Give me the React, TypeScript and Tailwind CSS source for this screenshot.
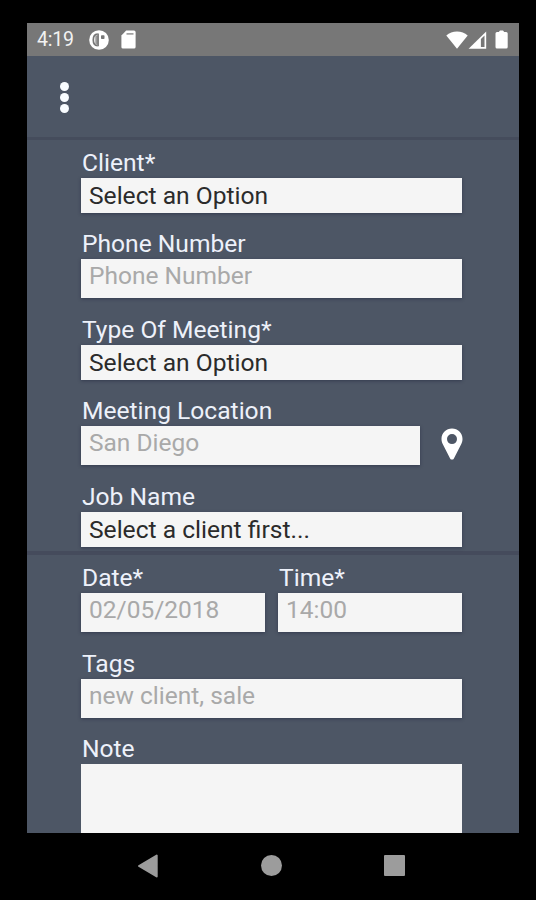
import type { ReactNode } from 'react';

function Label({ children, className = '' }: { children: ReactNode; className?: string }) {
  return (
    <div className={`h-[30px] whitespace-nowrap pl-px text-[24.6px] leading-[30px] text-[#edf1fa] ${className}`}>
      {children}
    </div>
  );
}

function Select({ value }: { value: string }) {
  return (
    <div className="h-[35px] whitespace-nowrap bg-[#f5f5f5] pl-2 pt-[3px] text-[24.6px] leading-[30px] text-[#2b2b2b] shadow-[0_1px_3px_rgba(30,34,60,0.5)]">
      {value}
    </div>
  );
}

function Input({ hint, className = '' }: { hint: string; className?: string }) {
  return (
    <div
      className={`h-[39px] whitespace-nowrap bg-[#f5f5f5] pl-2 pt-[2px] text-[24.5px] leading-[30px] text-[#a9a9a9] shadow-[0_1px_3px_rgba(30,34,60,0.5)] ${className}`}
    >
      {hint}
    </div>
  );
}

function StatusBar() {
  return (
    <div className="flex h-[33px] shrink-0 items-center bg-[#777777] pl-[10px] pr-[11px] text-white">
      <span className="w-[52px] pt-px text-[19.5px] leading-none tracking-[-0.2px] text-[#f2f2f2]">4:19</span>
      <svg width="20" height="20" viewBox="0 0 20 20">
        <circle cx="10" cy="10" r="9.8" fill="#fff" />
        <path d="M8.600 4.200C5.600 4.400 4.300 6.800 4.300 10s1.500 5.400 4.300 5.700" fill="none" stroke="#777" strokeWidth="1.700" />
        <path d="M6.300 5.600h2.600v9H6.300z" fill="#999" />
        <path d="M8.300 3.400h1.600v12.900H8.300z" fill="#777" />
        <rect x="12" y="5.300" width="3.500" height="3.700" rx=".8" fill="#777" />
      </svg>
      <svg width="15" height="19" viewBox="0 0 15 19" className="ml-[12px]">
        <path d="M5.200.5h7.800a1.600 1.600 0 0 1 1.600 1.600v14.800a1.600 1.600 0 0 1-1.600 1.600H2A1.600 1.600 0 0 1 .4 16.900V5.500z" fill="#fff" />
        <path d="M5.500 3.200h7v1.400h-7z" fill="#8a8a8a" />
      </svg>
      <svg width="22" height="18" viewBox="0 0 22 18" className="ml-auto">
        <path d="M11 17.800.3 4.500C3.300 1.900 6.800.4 11 .4s7.700 1.500 10.700 4.100z" fill="#fff" />
      </svg>
      <svg width="19" height="18" viewBox="0 0 19 18">
        <path d="M18.200.4v17.300H.6z" fill="#fff" />
        <path d="M12.900 8l3.600-3.600v11.500h-3.600z" fill="#777" />
      </svg>
      <svg width="13" height="19" viewBox="0 0 13 19" className="ml-[8px]">
        <path d="M5 .4h3l1.200 1.700h2a1.500 1.500 0 0 1 1.500 1.500V17a1.500 1.500 0 0 1-1.500 1.500H2A1.500 1.500 0 0 1 .5 17V3.600A1.500 1.500 0 0 1 2 2.100h1.800z" fill="#fff" />
      </svg>
    </div>
  );
}

function MapPin() {
  return (
    <svg width="22" height="32" viewBox="0 0 22 32" className="-mr-px mt-[2px]">
      <path
        fillRule="evenodd"
        d="M11 .6C5.200.6.500 5.200.500 11c0 1.900.4 3.200 1.200 4.900l7.400 14.500c.8 1.600 3 1.600 3.800 0l7.400-14.500c.8-1.700 1.200-3 1.200-4.900C21.500 5.200 16.800.6 11 .6zm0 5.500a5 5 0 1 1 0 10 5 5 0 0 1 0-10z"
        fill="#fff"
      />
    </svg>
  );
}

export default function App() {
  return (
    <div className="flex h-[900px] w-[536px] flex-col overflow-hidden bg-black pl-[27px] pt-[23px] font-['Roboto',sans-serif]">
      <div className="flex h-[810px] w-[492px] flex-col overflow-hidden bg-[#4d5665]">
        <StatusBar />
        <header className="flex h-[84px] shrink-0 flex-col gap-[2px] border-b-[3px] border-[#454c5c] pl-[33px] pt-[26px]">
          <span className="size-[9px] rounded-full bg-[#f8fcff]" />
          <span className="size-[9px] rounded-full bg-[#f8fcff]" />
          <span className="size-[9px] rounded-full bg-[#f8fcff]" />
        </header>

        <section className="flex shrink-0 flex-col border-b-4 border-[#454b5c] pb-[4px] pl-[54px] pr-[57px] pt-[8px]">
          <Label>Client*</Label>
          <Select value="Select an Option" />
          <Label className="mt-[16px]">Phone Number</Label>
          <Input hint="Phone Number" />
          <Label className="mt-[17px]">Type Of Meeting*</Label>
          <Select value="Select an Option" />
          <Label className="mt-[16px]">Meeting Location</Label>
          <div className="flex justify-between">
            <Input hint="San Diego" className="w-[339px]" />
            <MapPin />
          </div>
          <Label className="mt-[17px]">Job Name</Label>
          <Select value="Select a client first..." />
        </section>

        <section className="flex grow flex-col pl-[54px] pr-[57px] pt-[8px]">
          <div className="grid grid-cols-2 gap-[13px]">
            <div>
              <Label>Date*</Label>
              <Input hint="02/05/2018" />
            </div>
            <div>
              <Label>Time*</Label>
              <Input hint="14:00" />
            </div>
          </div>
          <Label className="mt-[17px]">Tags</Label>
          <Input hint="new client, sale" />
          <Label className="mt-[16px]">Note</Label>
          <div className="grow bg-[#f5f5f5]" />
        </section>
      </div>

      <nav className="flex h-[65px] w-[492px] items-center justify-between pl-[110px] pr-[114px]">
        <svg width="21" height="24" viewBox="0 0 21 24">
          <path d="M19.700 1.500v21L2 12z" fill="#9c9c9c" stroke="#9c9c9c" strokeWidth="2" strokeLinejoin="round" />
        </svg>
        <span className="size-[21px] rounded-full bg-[#9c9c9c]" />
        <span className="size-[21px] rounded-[1px] bg-[#9c9c9c]" />
      </nav>
    </div>
  );
}
